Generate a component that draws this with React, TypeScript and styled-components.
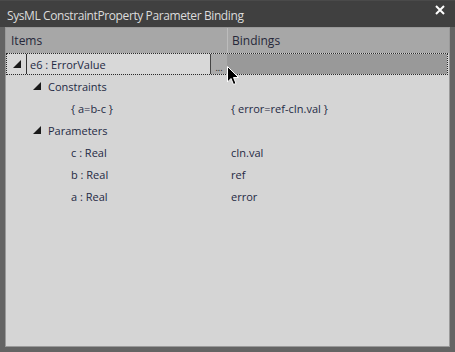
import React from "react";
import styled, { createGlobalStyle } from "styled-components";

const Global = createGlobalStyle`
  html, body { margin: 0; padding: 0; background: #646464; }
  body { font-family: "Open Sans", "Noto Sans", "Liberation Sans", sans-serif; }
`;

const Window = styled.div`
  width: 455px;
  height: 352px;
  background: #646464;
  display: flex;
  flex-direction: column;
  position: relative;
  overflow: hidden;
`;

const TitleBar = styled.div`
  height: 27px;
  box-sizing: border-box;
  background: #404040;
  border-top: 1px solid #4a4a4a;
  display: flex;
  align-items: center;
  padding: 0 8px 0 7px;
  color: #dcdcdc;
  font-size: 12px;
  letter-spacing: -0.4px;
`;

const Title = styled.div`
  flex: 1;
  margin-top: 2px;
`;

const Close = styled.div`
  width: 12px;
  height: 12px;
  margin-top: -8px;
  margin-right: 1px;
  display: flex;
`;

const Body = styled.div`
  flex: 1;
  padding: 0 5px 5px 5px;
  display: flex;
`;

const Panel = styled.div`
  flex: 1;
  background: #d5d5d5;
  border: 1px solid #9a9a9a;
  display: flex;
  flex-direction: column;
  color: #1f2a44;
  font-size: 11px;
`;

const Header = styled.div`
  height: 25px;
  background: #a7a7a7;
  display: grid;
  grid-template-columns: 221px 1fr;
  color: #26283a;
  font-size: 12px;
`;

const HeaderCell = styled.div<{ $divider?: boolean }>`
  display: flex;
  align-items: center;
  padding-left: ${(p) => (p.$divider ? "4px" : "5px")};
  border-left: ${(p) => (p.$divider ? "1px solid #bcbcbc" : "none")};
`;

const SelectedRow = styled.div`
  height: 22px;
  box-sizing: border-box;
  border: 1px dotted #2a2a2a;
  display: grid;
  grid-template-columns: 20px 183px 17px 1fr;
  margin-right: 1px;
`;

const Expander = styled.div`
  display: flex;
  align-items: center;
  justify-content: center;
  border-right: 1px solid #333;
  background: #d8d8d8;
`;

const NameCell = styled.div`
  display: flex;
  align-items: center;
  padding-left: 3px;
  background: #d8d8d8;
`;

const Ellipsis = styled.div`
  background: #aaaaaa;
  border-left: 1px solid #444;
  display: flex;
  align-items: flex-end;
  justify-content: center;
  font-size: 9px;
  line-height: 13px;
  color: #222;
`;

const BindingSel = styled.div`
  background: #999999;
`;

const Row = styled.div`
  height: 22px;
  display: grid;
  grid-template-columns: 225px 1fr;
`;

const ItemCell = styled.div<{ $indent: number }>`
  display: flex;
  align-items: center;
  padding-left: ${(p) => p.$indent}px;
`;

const BindCell = styled.div`
  display: flex;
  align-items: center;
`;

const Tri = styled.span`
  display: inline-flex;
  width: 15px;
`;

const Cursor = styled.svg`
  position: absolute;
  left: 227px;
  top: 66px;
`;

const Triangle = () => (
  <svg width="8" height="8" viewBox="0 0 8 8">
    <polygon points="8,0 8,8 0,8" fill="#1a1a1a" />
  </svg>
);

const rows: { name: string; indent: number; tri?: boolean; bind?: string }[] = [
  { name: "Constraints", indent: 27, tri: true },
  { name: "{ a=b-c }", indent: 65, bind: "{ error=ref-cIn.val }" },
  { name: "Parameters", indent: 27, tri: true },
  { name: "c : Real", indent: 65, bind: "cIn.val" },
  { name: "b : Real", indent: 65, bind: "ref" },
  { name: "a : Real", indent: 65, bind: "error" },
];

export default function App() {
  return (
    <>
      <Global />
      <Window>
        <TitleBar>
          <Title>SysML ConstraintProperty Parameter Binding</Title>
          <Close>
            <svg width="12" height="12" viewBox="0 0 12 12">
              <path d="M2 2 L10 10 M10 2 L2 10" stroke="#ffffff" strokeWidth="2" />
            </svg>
          </Close>
        </TitleBar>
        <Body>
          <Panel>
            <Header>
              <HeaderCell>Items</HeaderCell>
              <HeaderCell $divider>Bindings</HeaderCell>
            </Header>
            <SelectedRow>
              <Expander>
                <Triangle />
              </Expander>
              <NameCell>e6 : ErrorValue</NameCell>
              <Ellipsis>...</Ellipsis>
              <BindingSel />
            </SelectedRow>
            {rows.map((r, i) => (
              <Row key={i}>
                <ItemCell $indent={r.indent}>
                  {r.tri && (
                    <Tri>
                      <Triangle />
                    </Tri>
                  )}
                  {r.name}
                </ItemCell>
                <BindCell>{r.bind ?? ""}</BindCell>
              </Row>
            ))}
          </Panel>
        </Body>
        <Cursor width="13" height="20" viewBox="0 0 13 20">
          <path d="M0.5 0.5 L0.5 16 L4 12.5 L6.5 18.5 L9 17.5 L6.5 11.5 L11.5 11.5 Z" fill="#000" stroke="#fff" strokeWidth="1" />
        </Cursor>
      </Window>
    </>
  );
}
